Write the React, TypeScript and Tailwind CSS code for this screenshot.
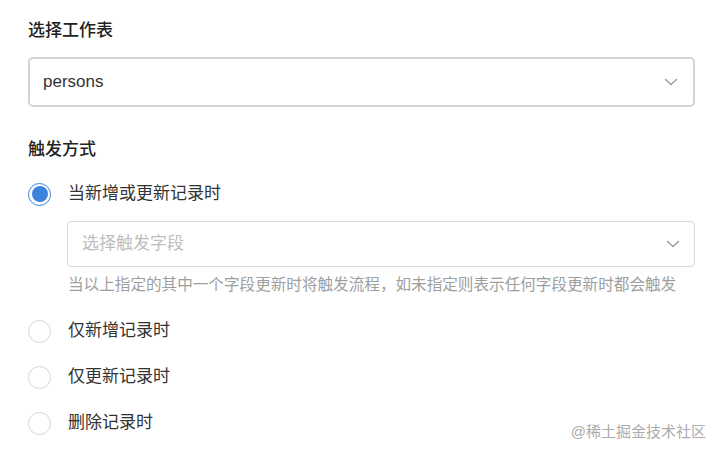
import React from "react";

const Chevron = () => (
  <svg width="14" height="8" viewBox="0 0 14 8" fill="none" className="shrink-0">
    <path d="M1.5 1.5 L7 6.5 L12.5 1.5" stroke="#9a9a9a" strokeWidth="1.4" strokeLinecap="round" strokeLinejoin="round" />
  </svg>
);

const Radio = ({ checked, label }: { checked?: boolean; label: string }) => (
  <div className="flex items-center h-[24px]">
    {checked ? (
      <div className="w-[23px] h-[23px] rounded-full border-[1.5px] border-[#3b82dc] flex items-center justify-center shrink-0">
        <div className="w-[16px] h-[16px] rounded-full bg-[#3b82dc]" />
      </div>
    ) : (
      <div className="w-[23px] h-[23px] rounded-full border-[1.5px] border-[#d6d6d6] bg-white shrink-0" />
    )}
    <span className="ml-[17px] text-[17px] leading-[24px] text-[#333]">{label}</span>
  </div>
);

export default function App() {
  return (
    <div
      className="relative w-[720px] h-[455px] bg-white overflow-hidden pl-[28px] pr-[25px] pt-[19px] flex flex-col"
      style={{ fontFamily: '"Liberation Sans", "Noto Sans CJK SC", sans-serif' }}
    >
      <div className="text-[17px] leading-[24px] font-medium text-[#222]">选择工作表</div>
      <div className="mt-[14px] h-[50px] border-2 border-[#d4d4d4] rounded-[5px] flex items-center justify-between pl-[13px] pr-[15px]">
        <span className="text-[17px] text-[#333]">persons</span>
        <Chevron />
      </div>

      <div className="mt-[31px] text-[17px] leading-[24px] font-medium text-[#222]">触发方式</div>

      <div className="mt-[20px]">
        <Radio checked label="当新增或更新记录时" />
      </div>
      <div className="ml-[39px] mt-[15px] h-[46px] border border-[#d9d9d9] rounded-[4px] flex items-center justify-between pl-[14px] pr-[14px]">
        <span className="text-[17px] text-[#bdbdbd]">选择触发字段</span>
        <Chevron />
      </div>
      <div className="ml-[40px] mt-[7px] text-[15.6px] leading-[22px] text-[#9e9e9e] whitespace-nowrap">
        当以上指定的其中一个字段更新时将触发流程，如未指定则表示任何字段更新时都会触发
      </div>

      <div className="mt-[23px] flex flex-col gap-[22px]">
        <Radio label="仅新增记录时" />
        <Radio label="仅更新记录时" />
        <Radio label="删除记录时" />
      </div>

      <div className="absolute right-[14px] bottom-[12px] text-[15px] leading-[22px] text-[#ababab]">
        @稀土掘金技术社区
      </div>
    </div>
  );
}
